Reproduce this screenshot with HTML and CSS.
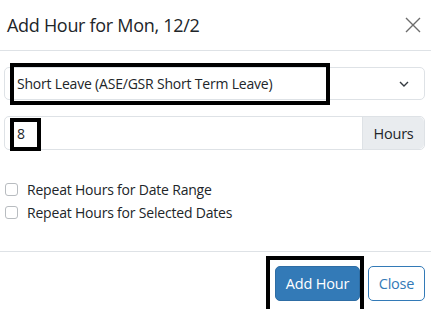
FILE: index.html
```html
<!DOCTYPE html>
<html>
<head>
<meta charset="utf-8">
<link rel="stylesheet" href="styles.css">
</head>
<body>
<div class="modal">
  <div class="modal-header">
    <h1 class="modal-title">Add Hour for Mon, 12/2</h1>
    <button class="close-x" aria-label="Close">
      <svg width="16" height="16" viewBox="0 0 16 16"><path d="M1 1 L15 15 M15 1 L1 15" stroke="#6c6c6c" stroke-width="1.4" fill="none"/></svg>
    </button>
  </div>
  <div class="modal-body">
    <div class="select-wrap">
      <div class="select">
        <span class="select-text">Short Leave (ASE/GSR Short Term Leave)</span>
        <svg class="chevron" width="10" height="6" viewBox="0 0 10 6"><path d="M1 1 L5 5 L9 1" stroke="#343a40" stroke-width="1.4" fill="none"/></svg>
      </div>
      <div class="mark mark-select"></div>
    </div>
    <div class="input-group">
      <div class="input">8</div>
      <div class="addon">Hours</div>
      <div class="mark mark-input"></div>
    </div>
    <div class="checks">
      <label class="check"><span class="box"></span>Repeat Hours for Date Range</label>
      <label class="check"><span class="box"></span>Repeat Hours for Selected Dates</label>
    </div>
  </div>
  <div class="modal-footer">
    <div class="btn-wrap">
      <button class="btn btn-primary">Add Hour</button>
      <div class="mark mark-btn"></div>
    </div>
    <button class="btn btn-outline">Close</button>
  </div>
</div>
</body>
</html>
```
FILE: styles.css
```css
html, body {
  margin: 0;
  padding: 0;
  background: #ffffff;
}
body {
  font-family: "Open Sans", "Noto Sans", sans-serif;
  color: #212529;
  width: 431px;
  height: 309px;
  overflow: hidden;
  letter-spacing: -0.2px;
}
.modal {
  width: 431px;
  height: 309px;
  display: flex;
  flex-direction: column;
}
.modal-header {
  height: 51px;
  box-sizing: border-box;
  border-bottom: 1px solid #dee2e6;
  display: flex;
  align-items: center;
  justify-content: space-between;
  padding: 0 6px 0 7px;
}
.modal-title {
  margin: 0;
  font-size: 18px;
  font-weight: 400;
  letter-spacing: -0.3px;
  color: #212529;
}
.close-x {
  border: 0;
  background: none;
  padding: 0;
  margin-right: 4px;
  display: flex;
}
.modal-body {
  padding: 16px 6px 0 4px;
  height: 201px;
  box-sizing: border-box;
  border-bottom: 1px solid #dee2e6;
}
.select-wrap {
  position: relative;
}
.select {
  height: 33px;
  box-sizing: border-box;
  border: 1px solid #dee2e6;
  border-radius: 5px;
  display: flex;
  align-items: center;
  justify-content: space-between;
  padding: 0 15px 0 12px;
  font-size: 14px;
}
.mark {
  position: absolute;
  border: 4px solid #000;
  box-sizing: border-box;
}
.mark-select {
  left: 6px;
  top: -4px;
  width: 320px;
  height: 42px;
}
.input-group {
  position: relative;
  margin-top: 16px;
  height: 34px;
  display: flex;
  border: 1px solid #dee2e6;
  border-radius: 5px;
  box-sizing: border-box;
  font-size: 14px;
}
.input {
  flex: 1;
  display: flex;
  align-items: center;
  padding-left: 12px;
}
.addon {
  width: 61px;
  background: #e9ecef;
  border-left: 1px solid #dee2e6;
  border-radius: 0 5px 5px 0;
  display: flex;
  align-items: center;
  justify-content: center;
  font-size: 14.5px;
}
.mark-input {
  left: 5px;
  top: 1px;
  width: 31px;
  height: 33px;
}
.checks {
  margin-top: 30px;
  display: flex;
  flex-direction: column;
  gap: 4px;
  font-size: 14px;
}
.check {
  display: flex;
  align-items: center;
  height: 19px;
}
.box {
  width: 13px;
  height: 13px;
  box-sizing: border-box;
  border: 1px solid #b8bcc0;
  border-radius: 3px;
  margin: 0 9px 0 1px;
}
.modal-footer {
  flex: 1;
  display: flex;
  justify-content: flex-end;
  align-items: flex-start;
  padding: 14px 6px 0 0;
  gap: 8px;
}
.btn-wrap {
  position: relative;
}
.btn {
  height: 35px;
  box-sizing: border-box;
  border-radius: 5px;
  font-family: inherit;
  font-size: 14.5px;
  letter-spacing: -0.2px;
  display: block;
}
.btn-primary {
  background: #337ab7;
  border: 1px solid #2e6da4;
  color: #fff;
  width: 85px;
  padding: 0;
}
.btn-outline {
  background: #fff;
  border: 1px solid #337ab7;
  color: #337ab7;
  width: 57px;
  padding: 0;
}
.mark-btn {
  left: -9px;
  top: -10px;
  width: 98px;
  height: 60px;
}
```
